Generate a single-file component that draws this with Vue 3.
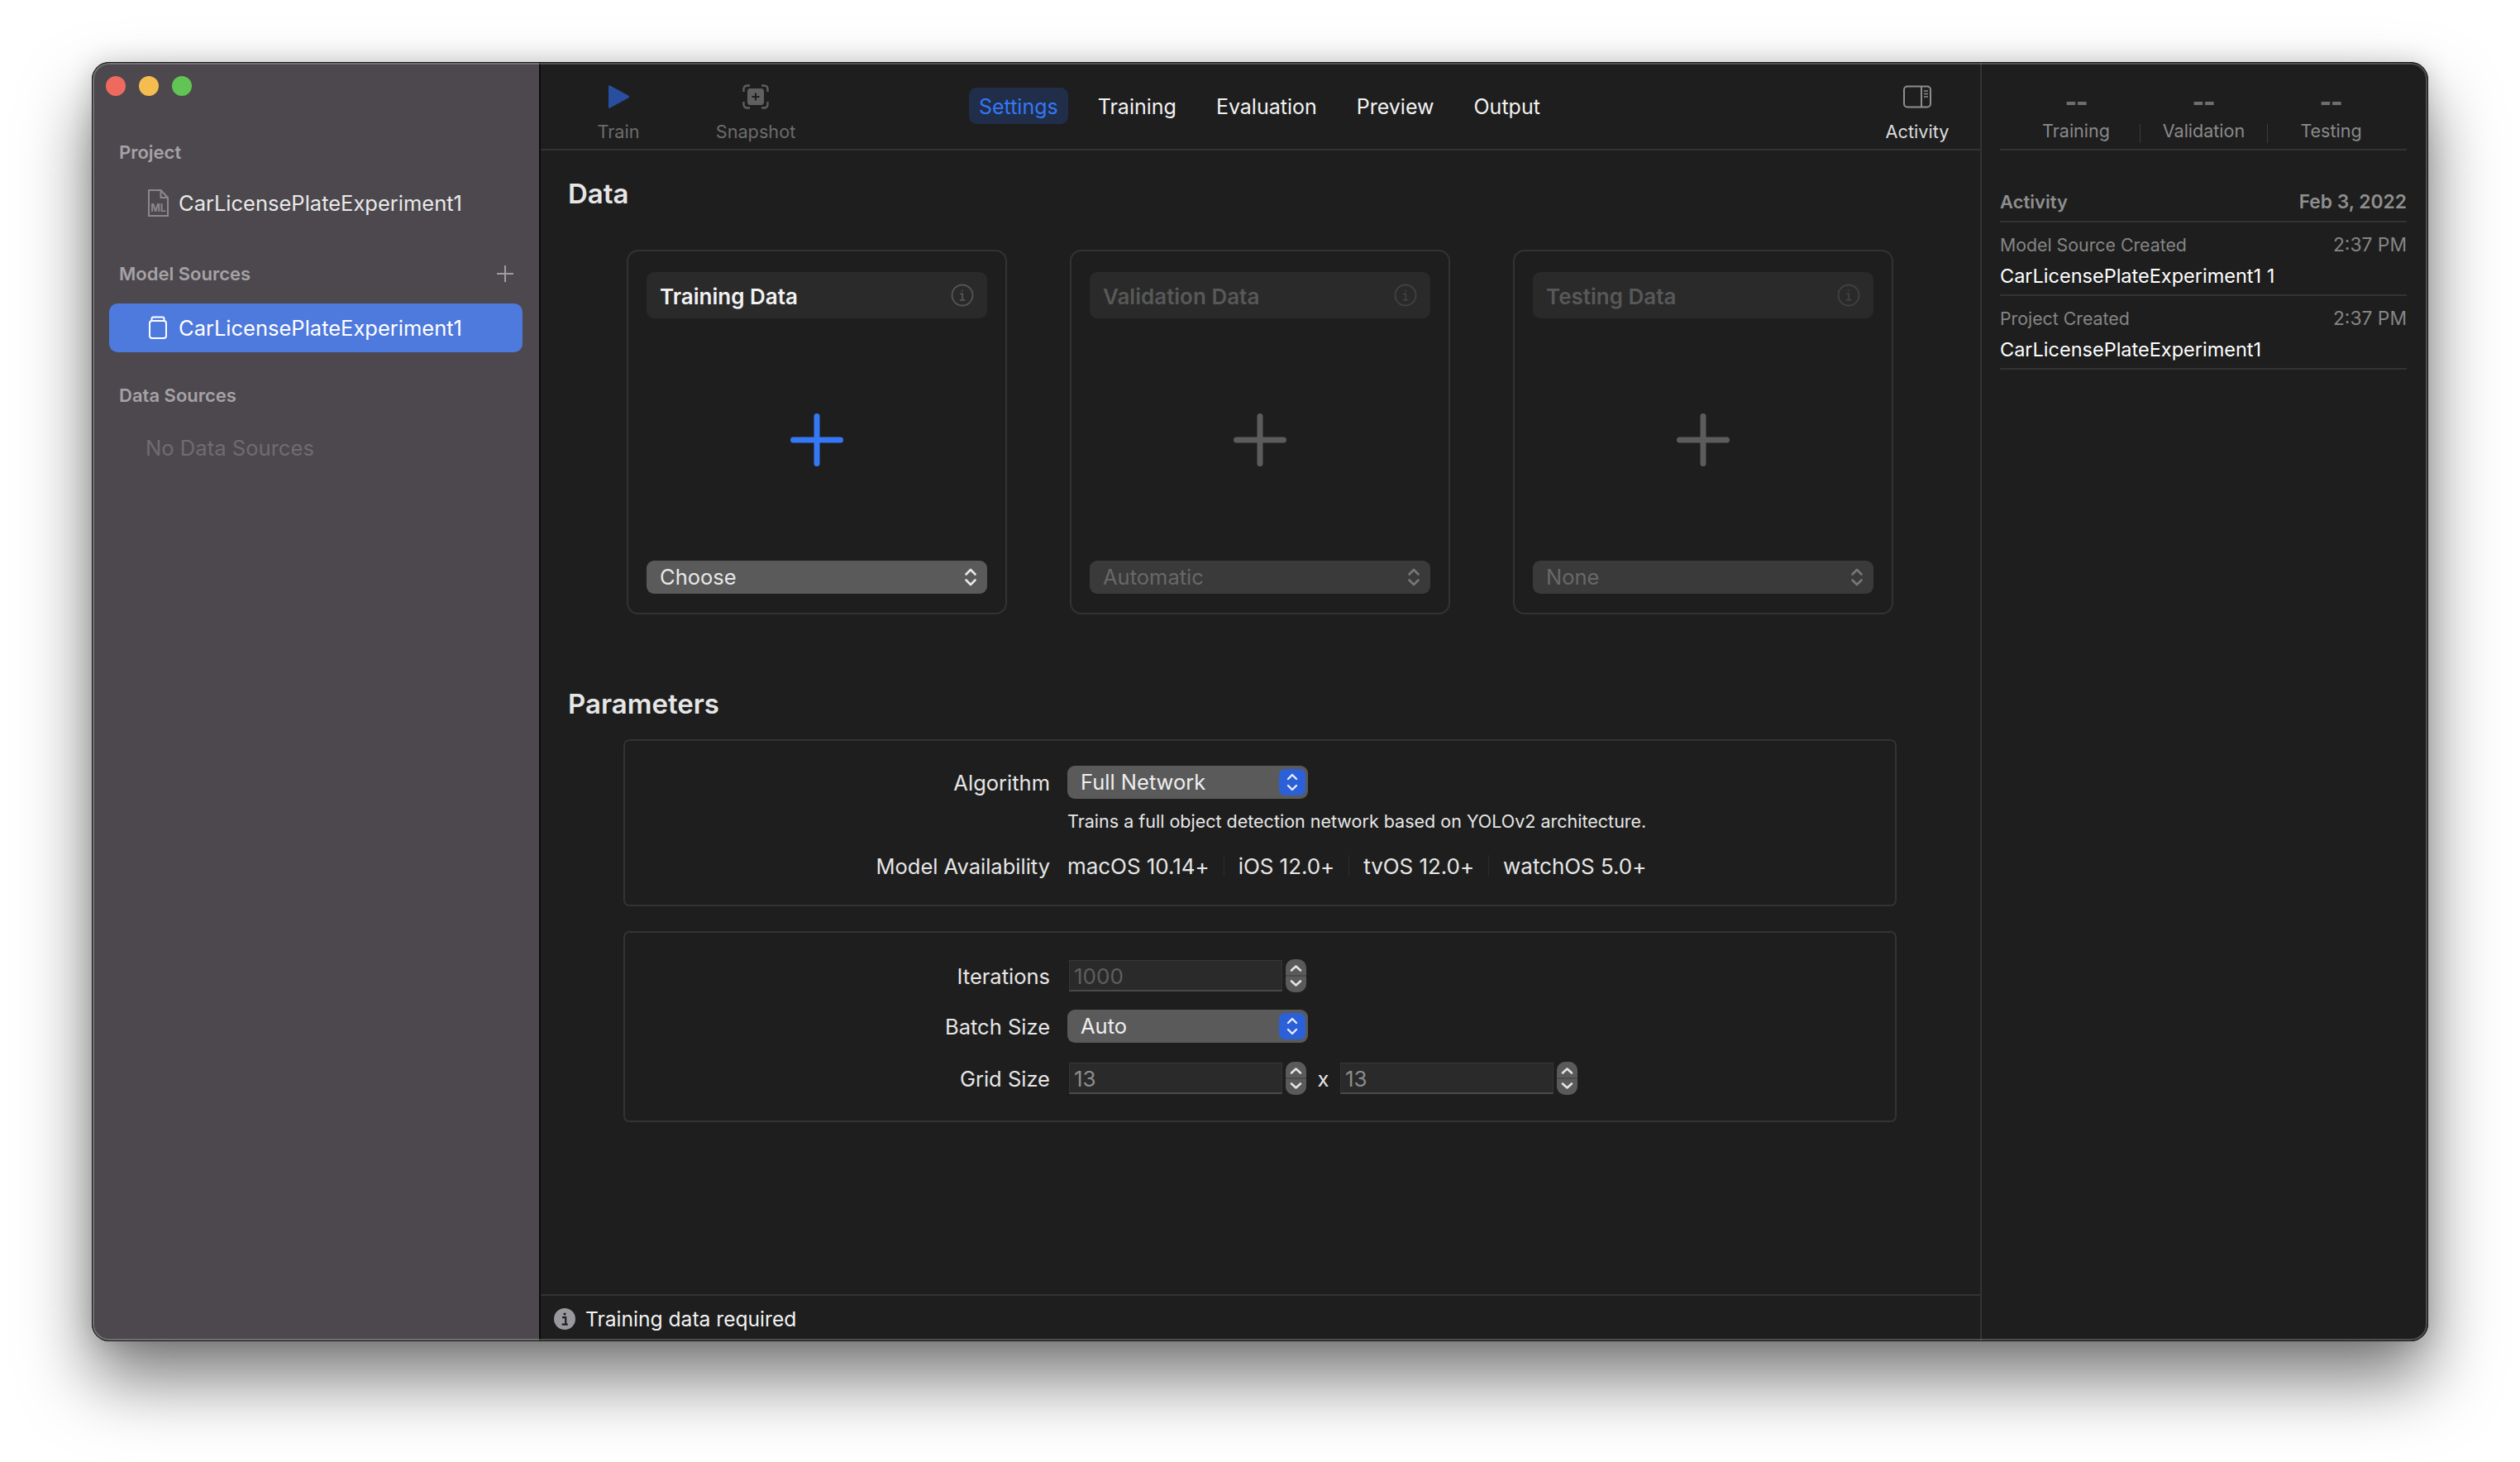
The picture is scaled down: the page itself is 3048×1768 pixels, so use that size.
<script setup>
const cards = [
  { title: 'Training Data', value: 'Choose', active: true },
  { title: 'Validation Data', value: 'Automatic', active: false },
  { title: 'Testing Data', value: 'None', active: false },
]
const tabs = ['Settings', 'Training', 'Evaluation', 'Preview', 'Output']
const stats = ['Training', 'Validation', 'Testing']
const platforms = ['macOS 10.14+', 'iOS 12.0+', 'tvOS 12.0+', 'watchOS 5.0+']
const entries = [
  { label: 'Model Source Created', time: '2:37 PM', name: 'CarLicensePlateExperiment1 1' },
  { label: 'Project Created', time: '2:37 PM', name: 'CarLicensePlateExperiment1' },
]
</script>

<template>
  <div class="page">
    <div class="window">
      <aside class="sidebar">
        <div class="lights">
          <span class="light red"></span>
          <span class="light yellow"></span>
          <span class="light green"></span>
        </div>
        <div class="sb-head first">Project</div>
        <div class="sb-row plain">
          <span class="sb-icon">
            <svg width="25" height="33" viewBox="0 0 25 33" fill="none" stroke="#8b888c" stroke-width="2">
              <path d="M1 1H15.5L24 10V32H1Z" />
              <path d="M15.5 1V10H24" />
              <text x="12.5" y="27" text-anchor="middle" fill="#8b888c" stroke="none" font-size="12.5" font-weight="700" font-family="Inter, sans-serif">ML</text>
            </svg>
          </span>
          CarLicensePlateExperiment1
        </div>
        <div class="sb-head second">
          Model Sources
          <svg class="sb-plus" width="20" height="20" viewBox="0 0 20 20" stroke="#a09da1" stroke-width="2">
            <path d="M10 0V20M0 10H20" />
          </svg>
        </div>
        <div class="sb-row selected">
          <span class="sb-icon">
            <svg width="24" height="28" viewBox="0 0 24 28" fill="none" stroke="#fff" stroke-width="2">
              <rect x="2" y="6" width="20" height="21" rx="3" />
              <path d="M4.5 6V3.5A2 2 0 0 1 6.5 1.5H17.5A2 2 0 0 1 19.5 3.5V6" />
            </svg>
          </span>
          CarLicensePlateExperiment1
        </div>
        <div class="sb-head third">Data Sources</div>
        <div class="sb-empty">No Data Sources</div>
      </aside>

      <main class="main">
        <header class="toolbar">
          <div class="tool">
            <svg width="30" height="30" viewBox="0 0 30 30">
              <path d="M3 2.5Q3 0.5 5 1.5L27 13.5Q29 15 27 16.5L5 28.5Q3 29.5 3 27.5Z" fill="#284f9f" />
            </svg>
            <span>Train</span>
          </div>
          <div class="tool">
            <svg width="32" height="30" viewBox="0 0 32 30" fill="none" stroke="#5f5f5f" stroke-width="2.4">
              <path d="M1.5 9V5.5A4 4 0 0 1 5.5 1.5H9M23 1.5H26.5A4 4 0 0 1 30.5 5.5V9M30.5 21V24.5A4 4 0 0 1 26.5 28.5H23M9 28.5H5.5A4 4 0 0 1 1.5 24.5V21" />
              <rect x="6" y="5" width="20" height="20" rx="3.5" fill="#5f5f5f" stroke="none" />
              <path d="M16 10.5V19.5M11.5 15H20.5" stroke="#1e1e1e" stroke-width="2" />
            </svg>
            <span>Snapshot</span>
          </div>
          <nav class="tabs">
            <span v-for="(t, i) in tabs" :key="t" class="tab" :class="{ current: i === 0 }">{{ t }}</span>
          </nav>
          <div class="tool bright">
            <svg width="34" height="27" viewBox="0 0 34 27" fill="none" stroke="#8e8e8e" stroke-width="2">
              <rect x="1" y="1" width="32" height="25" rx="4" />
              <path d="M22 1V26" />
              <path d="M25 6.5H30M25 10H30M25 13.5H30" stroke-width="1.6" />
            </svg>
            <span>Activity</span>
          </div>
        </header>

        <div class="content">
          <h2 class="title">Data</h2>
          <div class="cards">
            <section v-for="c in cards" :key="c.title" class="card" :class="{ off: !c.active }">
              <div class="card-title">
                <span class="card-name">{{ c.title }}</span>
                <svg width="28" height="28" viewBox="0 0 28 28" fill="none" :stroke="c.active ? '#555' : '#414141'" stroke-width="1.8">
                  <circle cx="14" cy="14" r="12.5" />
                  <path d="M11 12.3H14.2V19.8M10.8 19.8H17.4" />
                  <circle cx="14" cy="8.4" r="1" :fill="c.active ? '#555' : '#414141'" stroke="none" />
                </svg>
              </div>
              <div class="card-plus">
                <svg width="64" height="64" viewBox="0 0 64 64" :stroke="c.active ? '#3478f6' : '#5c5c5c'" stroke-width="7" stroke-linecap="round">
                  <path d="M32 3.5V60.5M3.5 32H60.5" />
                </svg>
              </div>
              <div class="card-select">
                <span class="lift">{{ c.value }}</span>
                <svg width="16" height="24" viewBox="0 0 16 24" fill="none" :stroke="c.active ? '#e8e8e8' : '#777'" stroke-width="2.6" stroke-linecap="round" stroke-linejoin="round">
                  <path d="M2.5 8.5L8 3L13.5 8.5M2.5 15.5L8 21L13.5 15.5" />
                </svg>
              </div>
            </section>
          </div>

          <h2 class="title params">Parameters</h2>

          <section class="box one">
            <div class="form-row">
              <label>Algorithm</label>
              <div class="select">
                <span class="lift">Full Network</span>
                <span class="select-btn">
                  <svg width="16" height="26" viewBox="0 0 16 26" fill="none" stroke="#e8eefc" stroke-width="2.4" stroke-linecap="round" stroke-linejoin="round">
                    <path d="M3 9L8 4L13 9M3 17L8 22L13 17" />
                  </svg>
                </span>
              </div>
            </div>
            <div class="form-row desc">
              <label></label>
              <span>Trains a full object detection network based on YOLOv2 architecture.</span>
            </div>
            <div class="form-row avail">
              <label>Model Availability</label>
              <div class="platforms">
                <span v-for="p in platforms" :key="p" class="platform">{{ p }}</span>
              </div>
            </div>
          </section>

          <section class="box two">
            <div class="form-row">
              <label>Iterations</label>
              <div class="number muted">1000</div>
              <div class="stepper">
                <svg width="25" height="40" viewBox="0 0 25 40" fill="none" stroke="#e4e4e4" stroke-width="2.6" stroke-linecap="round" stroke-linejoin="round">
                  <path d="M7 13.5L12.5 8.5L18 13.5M7 26.5L12.5 31.5L18 26.5" />
                  <path d="M0 20H25" stroke="#4a4a4a" stroke-width="2" stroke-linecap="butt" />
                </svg>
              </div>
            </div>
            <div class="form-row">
              <label>Batch Size</label>
              <div class="select">
                <span class="lift">Auto</span>
                <span class="select-btn">
                  <svg width="16" height="26" viewBox="0 0 16 26" fill="none" stroke="#e8eefc" stroke-width="2.4" stroke-linecap="round" stroke-linejoin="round">
                    <path d="M3 9L8 4L13 9M3 17L8 22L13 17" />
                  </svg>
                </span>
              </div>
            </div>
            <div class="form-row grid-row">
              <label>Grid Size</label>
              <div class="number">13</div>
              <div class="stepper">
                <svg width="25" height="40" viewBox="0 0 25 40" fill="none" stroke="#e4e4e4" stroke-width="2.6" stroke-linecap="round" stroke-linejoin="round">
                  <path d="M7 13.5L12.5 8.5L18 13.5M7 26.5L12.5 31.5L18 26.5" />
                  <path d="M0 20H25" stroke="#4a4a4a" stroke-width="2" stroke-linecap="butt" />
                </svg>
              </div>
              <span class="times">x</span>
              <div class="number second">13</div>
              <div class="stepper">
                <svg width="25" height="40" viewBox="0 0 25 40" fill="none" stroke="#e4e4e4" stroke-width="2.6" stroke-linecap="round" stroke-linejoin="round">
                  <path d="M7 13.5L12.5 8.5L18 13.5M7 26.5L12.5 31.5L18 26.5" />
                  <path d="M0 20H25" stroke="#4a4a4a" stroke-width="2" stroke-linecap="butt" />
                </svg>
              </div>
            </div>
          </section>
        </div>

        <footer class="status">
          <svg width="26" height="26" viewBox="0 0 26 26">
            <circle cx="13" cy="13" r="13" fill="#99999d" />
            <circle cx="13" cy="7" r="1.6" fill="#1e1e1e" />
            <path d="M10 11.2H14.2V19.6M9.6 19.6H16.8" fill="none" stroke="#1e1e1e" stroke-width="2.2" />
          </svg>
          Training data required
        </footer>
      </main>

      <aside class="inspector">
        <div class="stats">
          <div v-for="s in stats" :key="s" class="stat">
            <span class="dash">--</span>
            <span class="stat-label">{{ s }}</span>
          </div>
        </div>
        <div class="act-head">
          <span>Activity</span>
          <span class="wide">Feb 3, 2022</span>
        </div>
        <div v-for="e in entries" :key="e.label" class="entry">
          <div class="entry-top">
            <span>{{ e.label }}</span>
            <span class="wide">{{ e.time }}</span>
          </div>
          <div class="entry-name">{{ e.name }}</div>
        </div>
      </aside>
    </div>
  </div>
</template>

<style scoped>
.page {
  width: 3048px;
  height: 1768px;
  padding: 75px 111px 146px;
  box-sizing: border-box;
  background: #fff;
  font-family: Inter, "Liberation Sans", sans-serif;
  overflow: hidden;
}
.window {
  position: relative;
  display: flex;
  width: 2826px;
  height: 1547px;
  border-radius: 21px;
  overflow: hidden;
  background: #1e1e1e;
  color: #fff;
  font-size: 25px;
  box-shadow: 0 46px 84px rgba(0, 0, 0, 0.52), 0 0 30px rgba(0, 0, 0, 0.16);
}
.window::after {
  content: "";
  position: absolute;
  inset: 0;
  border-radius: 21px;
  border: 1px solid #161616;
  box-shadow: inset 0 0 0 2px rgba(255, 255, 255, 0.22);
  pointer-events: none;
}

/* sidebar */
.sidebar {
  width: 543px;
  flex: none;
  box-sizing: border-box;
  background: #4c484d;
  border-right: 2px solid #0c0c0c;
}
.lights {
  display: flex;
  gap: 16px;
  padding: 17px 0 0 17px;
}
.light {
  width: 24px;
  height: 24px;
  border-radius: 50%;
}
.red { background: #ee6a5f; }
.yellow { background: #f5bd4f; }
.green { background: #61c454; }
.sb-head {
  position: relative;
  height: 32px;
  line-height: 32px;
  padding-left: 33px;
  font-size: 22px;
  font-weight: 600;
  color: #a5a2a6;
}
.sb-head.first { margin-top: 52px; }
.sb-head.second { margin-top: 40px; }
.sb-head.third { margin-top: 36px; }
.sb-plus {
  position: absolute;
  right: 31px;
  top: 6px;
}
.sb-row {
  display: flex;
  align-items: center;
  box-sizing: border-box;
  margin: 0 20px 0 21px;
  padding: 0 0 1px 47px;
  height: 59px;
  border-radius: 10px;
  color: #e9e8e9;
  font-size: 25.5px;
}
.sb-row.plain { margin-top: 16px; }
.sb-row.selected {
  margin-top: 20px;
  background: #4e79dd;
  color: #fff;
}
.sb-icon {
  width: 37px;
  flex: none;
  display: flex;
  align-items: center;
}
.sb-empty {
  margin-top: 19px;
  height: 58px;
  line-height: 58px;
  padding-left: 65px;
  font-size: 25.6px;
  color: #6f6c70;
}

/* main */
.main {
  flex: 1;
  min-width: 0;
  display: flex;
  flex-direction: column;
}
.toolbar {
  height: 107px;
  flex: none;
  box-sizing: border-box;
  display: flex;
  padding: 27px 16px 0 34px;
  border-bottom: 2px solid #333;
}
.tool {
  width: 120px;
  margin-right: 46px;
  display: flex;
  flex-direction: column;
  align-items: center;
  color: #6c6c6c;
  font-size: 21.7px;
  line-height: 28px;
}
.tool svg {
  flex: none;
  height: 30px;
  margin-bottom: 13px;
}
.tool.bright {
  margin: 0 0 0 auto;
  color: #dcdcdc;
}
.tabs {
  display: flex;
  align-items: center;
  gap: 24px;
  height: 44px;
  margin: 4px 0 0 152px;
}
.tab {
  padding: 0 12px;
  height: 44px;
  line-height: 46px;
  border-radius: 9px;
  color: #f2f2f2;
}
.tab.current {
  background: #202e4a;
  color: #3478f6;
}
.content {
  flex: 1;
  min-height: 0;
  padding: 32px 0 0 33px;
}
.title {
  margin: 0;
  font-size: 33px;
  line-height: 40px;
  font-weight: 600;
  color: #e6e6e6;
}
.title.params { margin-top: 88px; }
.cards {
  display: flex;
  gap: 76px;
  margin: 48px 0 0 71px;
}
.card {
  width: 460px;
  height: 441px;
  box-sizing: border-box;
  padding: 25px 22px 23px;
  display: flex;
  flex-direction: column;
  border: 2px solid #333;
  border-radius: 14px;
}
.card-title {
  display: flex;
  align-items: center;
  justify-content: space-between;
  height: 56px;
  flex: none;
  padding: 0 16px;
  border-radius: 9px;
  background: #2a2a2a;
  font-size: 26px;
  font-weight: 600;
  color: #f2f2f2;
}
.card-name {
  padding-top: 2px;
}
.card-plus {
  flex: 1;
  display: flex;
  align-items: center;
  justify-content: center;
  padding-top: 1px;
}
.card-select {
  display: flex;
  align-items: center;
  justify-content: space-between;
  height: 40px;
  flex: none;
  padding: 0 12px 0 16px;
  border-radius: 9px;
  background: #5a5a5a;
  color: #e8e8e8;
  font-size: 25.5px;
}
.lift {
  padding-bottom: 2px;
}
.card.off .card-title { color: #585858; }
.card.off .card-select {
  background: #3a3a3a;
  color: #686868;
}
.box {
  margin: 23px 0 0 67px;
  width: 1540px;
  box-sizing: border-box;
  border: 2px solid #333;
  border-radius: 7px;
}
.box.one {
  padding: 30px 0;
  height: 202px;
}
.box.two {
  margin-top: 30px;
  padding: 32px 0 31px;
  display: flex;
  flex-direction: column;
  gap: 21px;
}
.form-row {
  display: flex;
  align-items: center;
  height: 40px;
  color: #e6e6e6;
  font-size: 25.5px;
}
.form-row.grid-row { margin-top: 2px; }
.form-row label {
  width: 514px;
  flex: none;
  text-align: right;
  margin-right: 21px;
}
.desc {
  height: 30px;
  margin-top: 12px;
  font-size: 21.5px;
}
.avail {
  height: 30px;
  margin-top: 24px;
}
.platforms {
  display: flex;
  gap: 35px;
  font-size: 26px;
  letter-spacing: -0.05px;
}
.platform {
  position: relative;
}
.platform + .platform::before {
  content: "";
  position: absolute;
  left: -18px;
  top: 2px;
  width: 1px;
  height: 26px;
  background: #2c2c2c;
}
.select {
  display: flex;
  align-items: center;
  justify-content: space-between;
  width: 291px;
  height: 40px;
  box-sizing: border-box;
  padding: 0 3px 0 16px;
  border-radius: 9px;
  background: #5a5a5a;
  color: #eee;
}
.select-btn {
  width: 32px;
  height: 32px;
  display: flex;
  align-items: center;
  justify-content: center;
  border-radius: 7px;
  background: #2c60d8;
}
.number {
  width: 258px;
  height: 38px;
  margin-left: 2px;
  box-sizing: border-box;
  padding-left: 5px;
  line-height: 37px;
  font-size: 26px;
  background: #2a2a2a;
  border-top: 1px solid #383838;
  border-left: 1px solid #333;
  border-right: 1px solid #333;
  border-bottom: 2px solid #4a4a4a;
  color: #8c8c8c;
}
.number.muted { color: #5e5e5e; }
.number.second { margin-left: 0; }
.stepper {
  width: 25px;
  height: 40px;
  margin-left: 4px;
  border-radius: 10px;
  background: #5a5a5a;
  overflow: hidden;
}
.stepper svg { display: block; }
.times {
  width: 41px;
  text-align: center;
  color: #e6e6e6;
}
.status {
  height: 57px;
  flex: none;
  box-sizing: border-box;
  display: flex;
  align-items: center;
  gap: 12px;
  padding-left: 16px;
  border-top: 2px solid #333;
  color: #f2f2f2;
  font-size: 24.6px;
}

/* inspector */
.inspector {
  width: 542px;
  flex: none;
  box-sizing: border-box;
  padding: 0 26px 0 22px;
  border-left: 2px solid #333;
}
.stats {
  display: flex;
  height: 107px;
  box-sizing: border-box;
  padding: 0 15px;
  border-bottom: 2px solid #333;
}
.stat {
  flex: 1;
  display: flex;
  flex-direction: column;
  align-items: center;
  justify-content: flex-end;
  padding-bottom: 7px;
  color: #8a8a8a;
  font-size: 21.5px;
}
.dash {
  font-size: 31px;
  font-weight: 800;
  line-height: 34px;
  letter-spacing: -1px;
  color: #6e6e6e;
  margin-bottom: 10px;
}
.stat-label {
  width: 100%;
  height: 23px;
  line-height: 16px;
  text-align: center;
}
.stat + .stat .stat-label {
  border-left: 1px solid #3c3c3c;
}
.act-head,
.entry-top {
  display: flex;
  justify-content: space-between;
  line-height: 30px;
  font-size: 21.3px;
}
.act-head {
  margin-top: 47px;
  padding-bottom: 8px;
  border-bottom: 2px solid #333;
  font-size: 22px;
  font-weight: 600;
  color: #8f8f8f;
}
.wide {
  font-size: 22.8px;
}
.entry {
  padding: 12px 0 7px;
  border-bottom: 2px solid #333;
}
.entry-top {
  color: #858585;
}
.entry-name {
  margin-top: 8px;
  line-height: 30px;
  font-size: 23.5px;
  color: #fff;
}
</style>
